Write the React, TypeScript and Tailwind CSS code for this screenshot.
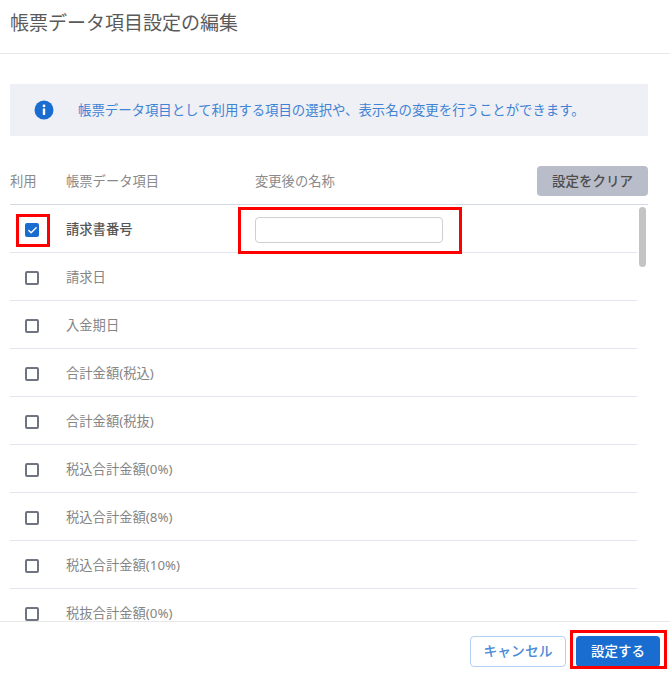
import { Check } from "lucide-react";

const ROWS = [
  "請求書番号",
  "請求日",
  "入金期日",
  "合計金額(税込)",
  "合計金額(税抜)",
  "税込合計金額(0%)",
  "税込合計金額(8%)",
  "税込合計金額(10%)",
  "税抜合計金額(0%)",
];

function InfoIcon() {
  return (
    <svg width="20" height="20" viewBox="0 0 20 20" className="shrink-0">
      <circle cx="10" cy="10" r="9.5" fill="#1a6dd0" />
      <circle cx="10" cy="5.9" r="1.4" fill="#fff" />
      <rect x="8.8" y="8.4" width="2.4" height="6.6" rx="0.4" fill="#fff" />
    </svg>
  );
}

function Row({ label, index }: { label: string; index: number }) {
  const selected = index === 0;
  return (
    <div className="flex h-[48px] shrink-0 items-center border-b border-[#e2e5ee] pt-[3px]">
      <div className="flex w-[56px] shrink-0 justify-center">
        {selected ? (
          <span className="ml-[-12px] flex h-[14px] w-[14px] items-center justify-center rounded-[2px] bg-[#1a6dd0]">
            <Check size={11} strokeWidth={3} className="text-white" />
          </span>
        ) : (
          <span className="ml-[-12px] h-[14px] w-[14px] rounded-[2px] border-2 border-[#6f7480]" />
        )}
      </div>
      <div className={`w-[189px] shrink-0 text-[13.3px] ${selected ? "font-medium text-[#555]" : "text-[#858585]"}`}>
        {label}
      </div>
      {selected && (
        <div className="h-[26px] w-[188px] rounded-[4px] border border-[#cfcfcf] bg-white" />
      )}
    </div>
  );
}

export default function App() {
  return (
    <div
      className="relative flex h-[677px] w-[670px] flex-col overflow-hidden bg-white"
      style={{ fontFamily: '"Noto Sans", "Noto Sans CJK JP", sans-serif' }}
    >
      <header className="flex h-[54px] shrink-0 items-start border-b border-[#e8e8e8] px-[10px] pt-[9px] text-[19px] leading-[28px] text-[#5a5a5a]">
        帳票データ項目設定の編集
      </header>

      <div className="flex min-h-0 flex-1 flex-col pl-[10px] pr-[22px] pt-[30px]">
        <div className="flex h-[52px] shrink-0 items-center gap-[24px] bg-[#eff0f5] pl-[24px] text-[13.4px] text-[#3f83d4]">
          <InfoIcon />
          <span>帳票データ項目として利用する項目の選択や、表示名の変更を行うことができます。</span>
        </div>

        <div className="mt-[30px] flex h-[39px] shrink-0 items-start border-b border-[#d5d9e5]">
          <div className="w-[56px] pt-[6px] text-[13.3px] text-[#8a8a8a]">利用</div>
          <div className="w-[189px] pt-[6px] text-[13.3px] text-[#8a8a8a]">帳票データ項目</div>
          <div className="flex-1 pt-[6px] text-[13.3px] text-[#8a8a8a]">変更後の名称</div>
          <button className="h-[30px] w-[111px] rounded-[4px] bg-[#b9bdc9] text-[13.5px] font-medium text-[#4d4d4d]">
            設定をクリア
          </button>
        </div>

        <div className="relative min-h-0 flex-1 overflow-hidden">
          <div className="flex w-[627px] flex-col">
            {ROWS.map((label, i) => (
              <Row key={label} label={label} index={i} />
            ))}
          </div>
          <div className="absolute left-[629px] top-[2px] h-[60px] w-[7px] rounded-full bg-[#c4c4c4]" />
        </div>
      </div>

      <footer className="flex h-[56px] shrink-0 items-start justify-end gap-[10px] border-t border-[#e8e8e8] pr-[10px] pt-[14px]">
        <button className="h-[31px] w-[96px] rounded-[4px] border border-[#b5d0f0] bg-white text-[13.8px] font-medium text-[#4a8ad8]">
          キャンセル
        </button>
        <button className="h-[31px] w-[84px] rounded-[4px] bg-[#1a6dd0] text-[13.5px] font-medium text-white">
          設定する
        </button>
      </footer>

      {/* red annotation boxes */}
      <div className="pointer-events-none absolute left-[16px] top-[214px] h-[33px] w-[34px] border-[3px] border-[#f00]" />
      <div className="pointer-events-none absolute left-[238px] top-[207px] h-[47px] w-[224px] border-[3px] border-[#f00]" />
      <div className="pointer-events-none absolute left-[570px] top-[630px] h-[39px] w-[97px] border-[3px] border-[#f00]" />
    </div>
  );
}
